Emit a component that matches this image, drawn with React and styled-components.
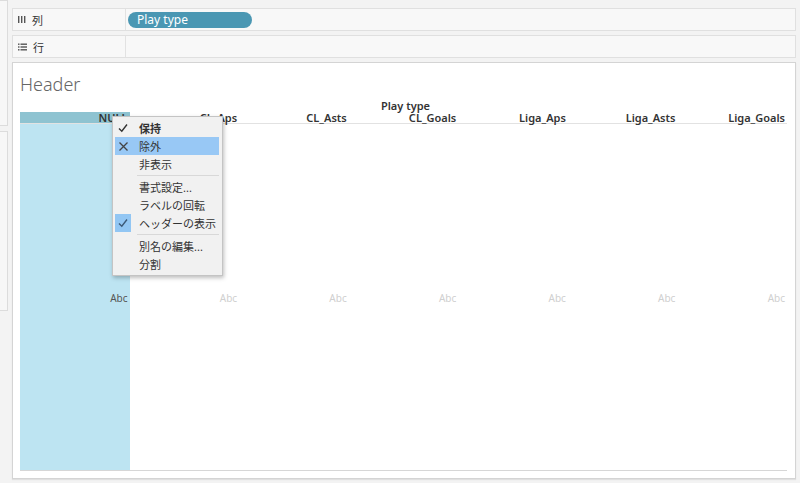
import React from "react";
import styled, { createGlobalStyle } from "styled-components";

const GlobalStyle = createGlobalStyle`
  html, body {
    margin: 0;
    padding: 0;
    background: #f3f3f3;
    font-family: "Noto Sans", "Noto Sans CJK JP", sans-serif;
  }
  #root {
    width: 800px;
    height: 483px;
    overflow: hidden;
  }
`;

const Page = styled.div`
  display: flex;
  width: 800px;
  height: 483px;
  gap: 4px;
`;

const Sidebar = styled.div`
  width: 8px;
  display: flex;
  flex-direction: column;
  gap: 5px;
`;

const SidePanel = styled.div`
  height: ${(p) => p.h}px;
  background: #f7f7f7;
  border: 1px solid #dcdcdc;
  border-left: none;
  box-sizing: border-box;
`;

const Main = styled.div`
  width: 784px;
  display: flex;
  flex-direction: column;
  gap: 4px;
  padding-top: 8px;
`;

const Shelf = styled.div`
  height: 23px;
  display: flex;
  background: #f8f8f8;
  border: 1px solid #e0e0e0;
  box-sizing: border-box;
`;

const ShelfLabel = styled.div`
  width: 113px;
  display: flex;
  align-items: center;
  gap: 6px;
  padding-left: 5px;
  font-size: 11px;
  color: #333;
  border-right: 1px solid #e2e2e2;
  box-sizing: border-box;
`;

const ShelfBody = styled.div`
  flex: 1;
  display: flex;
  align-items: center;
  padding-left: 2px;
`;

const Pill = styled.div`
  width: 124px;
  height: 16px;
  border-radius: 8px;
  background: #4a97b3;
  color: #fff;
  font-size: 12px;
  line-height: 16px;
  padding-left: 9px;
  box-sizing: border-box;
`;

const Card = styled.div`
  position: relative;
  height: 417px;
  background: #fff;
  border: 1px solid #d4d4d4;
  box-shadow: 0 1px 1px rgba(0, 0, 0, 0.08);
  box-sizing: border-box;
  padding: 9px 0 7px 7px;
  display: flex;
  flex-direction: column;
`;

const Title = styled.div`
  font-size: 18px;
  line-height: 24px;
  font-weight: 300;
  color: #666;
`;

const Table = styled.div`
  width: 767px;
  flex: 1;
  display: grid;
  grid-template-columns: repeat(7, 1fr);
  grid-template-rows: 13px 12px 1fr;
  margin-top: 3px;
  border-bottom: 1px solid #d6d6d6;
`;

const Caption = styled.div`
  grid-column: 1 / -1;
  text-align: center;
  font-size: 11px;
  font-weight: 600;
  color: #333;
  line-height: 13px;
  padding-left: 4px;
`;

const HeadCell = styled.div`
  font-size: 11px;
  font-weight: 600;
  color: #333;
  line-height: 12px;
  text-align: right;
  padding-right: 2px;
  border-bottom: 1px solid #e2e2e2;
  background: ${(p) => (p.selected ? "#8ec3d1" : "transparent")};
  white-space: nowrap;
`;

const BodyCell = styled.div`
  display: flex;
  align-items: center;
  justify-content: flex-end;
  padding-right: 2px;
  padding-top: 2px;
  font-size: 10px;
  color: ${(p) => (p.selected ? "#555" : "#cfcfcf")};
  background: ${(p) => (p.selected ? "#bde4f2" : "transparent")};
`;

const Menu = styled.div`
  position: absolute;
  left: 99px;
  top: 53px;
  width: 111px;
  padding: 2px 3px 2px 2px;
  box-sizing: border-box;
  background: #f1f1f1;
  border: 1px solid #c4c4c4;
  box-shadow: 1px 2px 4px rgba(0, 0, 0, 0.25);
  z-index: 2;
`;

const Item = styled.div`
  height: 18px;
  display: flex;
  align-items: center;
  font-size: 11px;
  color: #333;
  font-weight: ${(p) => (p.bold ? 700 : 400)};
  background: ${(p) => (p.active ? "#98c8f5" : "transparent")};
`;

const Mark = styled.div`
  width: 16px;
  height: 18px;
  margin-right: 8px;
  display: flex;
  align-items: center;
  justify-content: center;
  background: ${(p) => (p.boxed ? "#92c6f3" : "transparent")};
`;

const Separator = styled.div`
  height: 5px;
  display: flex;
  align-items: center;
  padding-left: 22px;
  &::after {
    content: "";
    flex: 1;
    height: 1px;
    background: #d8d8d8;
  }
`;

const Check = ({ color = "#333" }) => (
  <svg width="12" height="12" viewBox="0 0 12 12">
    <path d="M2 6.5 L4.8 9.3 L10 2.5" fill="none" stroke={color} strokeWidth="1.4" />
  </svg>
);

const Cross = () => (
  <svg width="11" height="11" viewBox="0 0 11 11">
    <path d="M1.5 1.5 L9.5 9.5 M9.5 1.5 L1.5 9.5" stroke="#444" strokeWidth="1.3" />
  </svg>
);

const ColumnsIcon = () => (
  <svg width="8" height="9" viewBox="0 0 8 9">
    <rect x="0" y="1" width="1.4" height="7" fill="#555" />
    <rect x="3" y="1" width="1.4" height="7" fill="#555" />
    <rect x="6" y="1" width="1.4" height="7" fill="#555" />
  </svg>
);

const RowsIcon = () => (
  <svg width="9" height="8" viewBox="0 0 9 8">
    <rect x="0" y="0.5" width="1.5" height="1.4" fill="#555" />
    <rect x="2.5" y="0.5" width="6.5" height="1.4" fill="#555" />
    <rect x="0" y="3.3" width="1.5" height="1.4" fill="#555" />
    <rect x="2.5" y="3.3" width="6.5" height="1.4" fill="#555" />
    <rect x="0" y="6.1" width="1.5" height="1.4" fill="#555" />
    <rect x="2.5" y="6.1" width="6.5" height="1.4" fill="#555" />
  </svg>
);

const columns = ["NULL", "CL_Aps", "CL_Asts", "CL_Goals", "Liga_Aps", "Liga_Asts", "Liga_Goals"];

export default function App() {
  return (
    <>
      <GlobalStyle />
      <Page>
        <Sidebar>
          <SidePanel h={126} />
          <SidePanel h={180} />
        </Sidebar>
        <Main>
          <Shelf>
            <ShelfLabel>
              <ColumnsIcon />
              列
            </ShelfLabel>
            <ShelfBody>
              <Pill>Play type</Pill>
            </ShelfBody>
          </Shelf>
          <Shelf>
            <ShelfLabel>
              <RowsIcon />
              行
            </ShelfLabel>
            <ShelfBody />
          </Shelf>
          <Card>
            <Title>Header</Title>
            <Table>
              <Caption>Play type</Caption>
              {columns.map((c, i) => (
                <HeadCell key={c} selected={i === 0}>
                  {c}
                </HeadCell>
              ))}
              {columns.map((c, i) => (
                <BodyCell key={c} selected={i === 0}>
                  Abc
                </BodyCell>
              ))}
            </Table>
            <Menu>
              <Item bold>
                <Mark>
                  <Check />
                </Mark>
                保持
              </Item>
              <Item active>
                <Mark>
                  <Cross />
                </Mark>
                除外
              </Item>
              <Item>
                <Mark />
                非表示
              </Item>
              <Separator />
              <Item>
                <Mark />
                書式設定...
              </Item>
              <Item>
                <Mark />
                ラベルの回転
              </Item>
              <Item>
                <Mark boxed>
                  <Check color="#3d5a78" />
                </Mark>
                ヘッダーの表示
              </Item>
              <Separator />
              <Item>
                <Mark />
                別名の編集...
              </Item>
              <Item>
                <Mark />
                分割
              </Item>
            </Menu>
          </Card>
        </Main>
      </Page>
    </>
  );
}
